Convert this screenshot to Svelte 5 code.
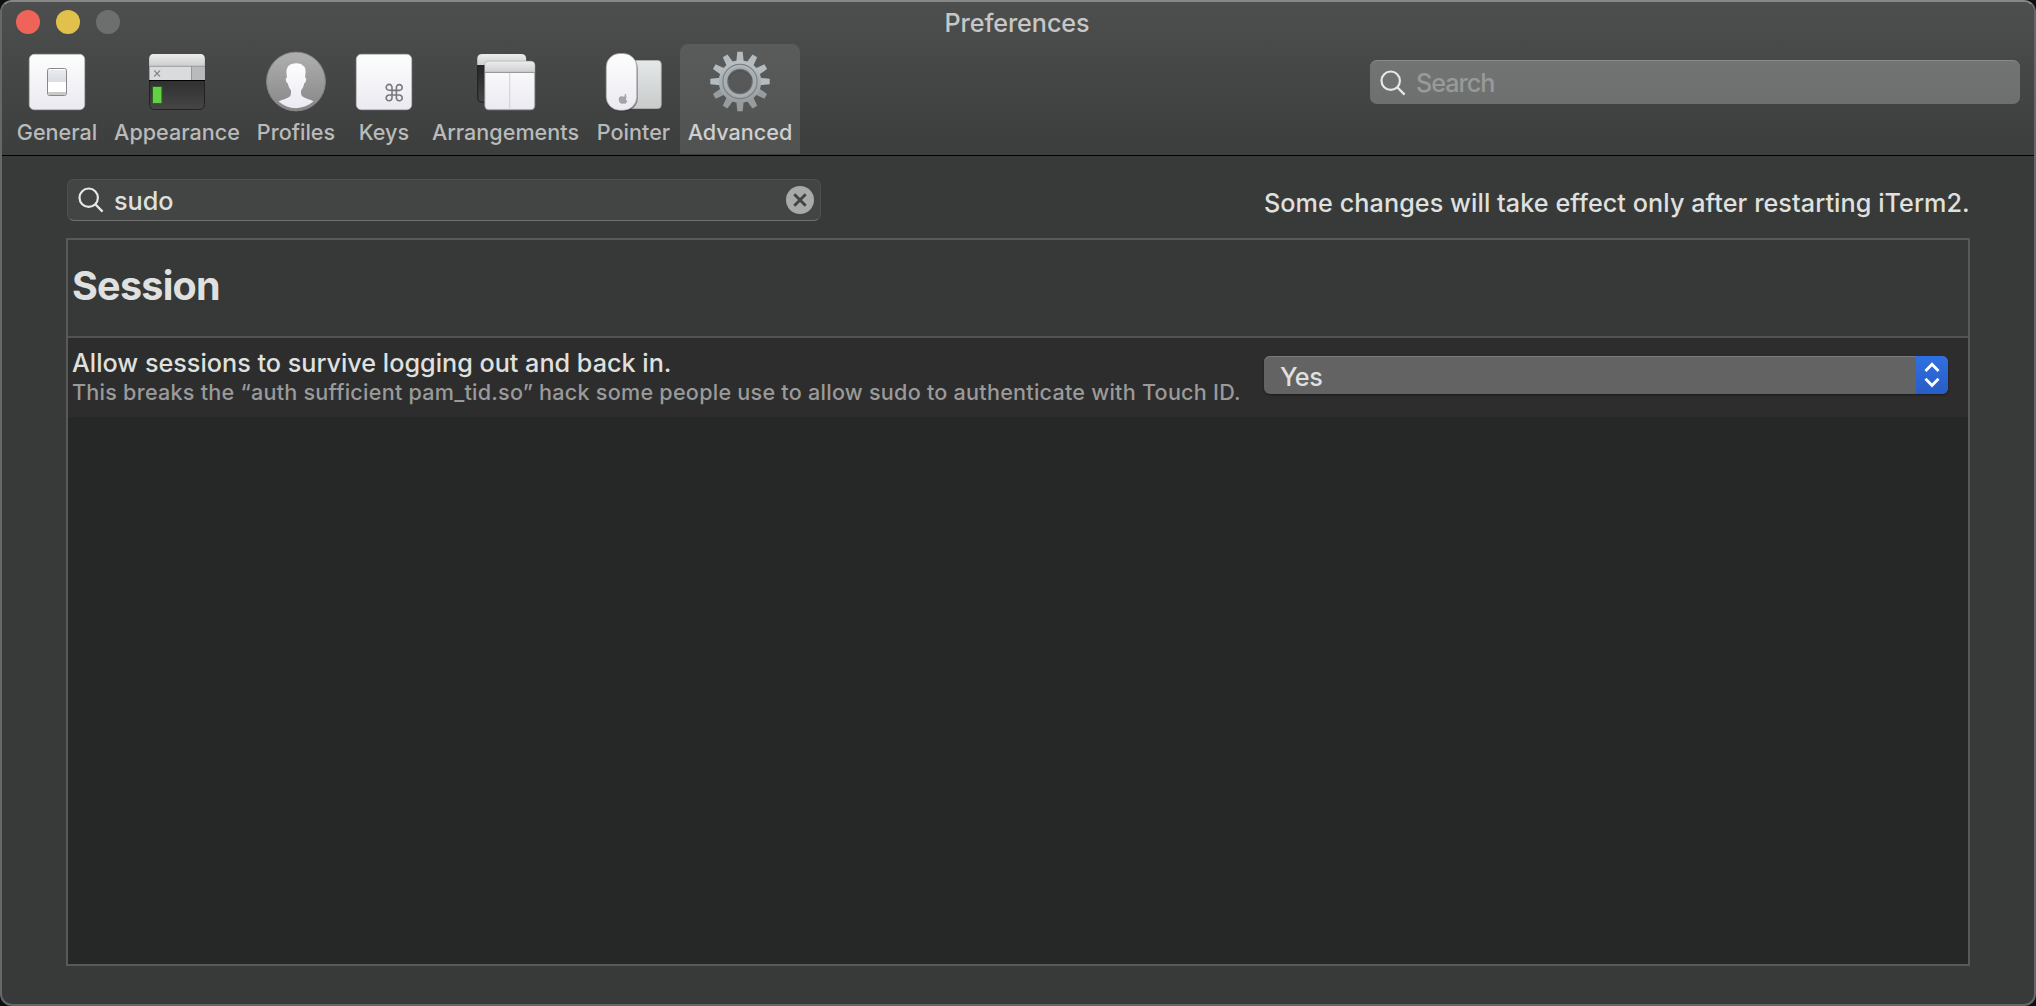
<script>
  const tabs = [
    { name: 'General', width: 98 },
    { name: 'Appearance', width: 142 },
    { name: 'Profiles', width: 96 },
    { name: 'Keys', width: 80 },
    { name: 'Arrangements', width: 163 },
    { name: 'Pointer', width: 93 },
    { name: 'Advanced', width: 120 }
  ];
  let active = $state('Advanced');
  let query = $state('sudo');
  const teeth = Array.from({ length: 12 }, (_, i) => i * 30);
</script>

{#snippet magnifier()}
  <svg class="magnifier" viewBox="0 0 26 26" width="26" height="26">
    <circle cx="10.7" cy="10.7" r="9.2" />
    <path d="M17.4 17.4 L24.6 24.6" />
  </svg>
{/snippet}

{#snippet icon(name)}
  <svg class="icon" viewBox="0 0 64 64" width="64" height="64">
    {#if name === 'General'}
      <rect x="4.3" y="4.3" width="55.4" height="55.4" rx="5" fill="url(#paper)" stroke="#b9babb" stroke-width=".7" />
      <rect x="22.5" y="18.5" width="19" height="27" rx="2" fill="#fff" stroke="#87888a" />
      <path d="M23 20h18v12H23z" fill="url(#switch)" />
      <path d="M23 42h18v1.5q0 1.5-1.5 1.5h-15q-1.5 0-1.5-1.5z" fill="#c9c9c7" />
    {:else if name === 'Appearance'}
      <rect x="4.5" y="4.5" width="55" height="55" rx="5" fill="url(#terminal)" stroke="#222" />
      <path d="M4.3 30V9q0-5 5-5h45.4q5 0 5 5v21z" fill="#dadbdc" />
      <path d="M4.3 16V9q0-5 5-5h45.4q5 0 5 5v7z" fill="url(#chrome)" />
      <path d="M46.5 16.5h13.2V30H46.5z" fill="#b9babc" />
      <path d="M4 16.3h56M46.5 16v14" stroke="#8b8c8e" stroke-width=".8" />
      <path d="M4 30.5h56" stroke="#000" />
      <path d="M9.2 20.5l5.8 6M15 20.5l-5.8 6" stroke="#88898b" stroke-width="1.2" />
      <rect x="7" y="36" width="10.5" height="18" fill="#2d7a20" opacity=".5" />
      <rect x="8" y="37" width="8.4" height="16" fill="#61d241" />
    {:else if name === 'Profiles'}
      <circle cx="32" cy="31.5" r="29.4" fill="url(#disc)" stroke="#858687" />
      <path
        d="M32.5 14C25 14 22 18 22.5 24.5L23 29c-1.5-.3-1.5 1-.8 3.5.5 1.8 1 2 1.6 2 .5 3.5 2 5.5 3.2 7.5 0 3.5 0 5-1.5 6.5-2.5 2-8 3-11 5C19.5 58 25.5 60.3 32 60.3S44.5 58 49.5 53.3c-3-2-8.5-3-11-5-1.5-1.5-1.5-3-1.5-6.3 1.5-2 2.7-4 3.2-7.5.8 0 1.2-.5 1.6-2 .7-2.5.7-3.8-.8-3.5l.5-4.5c.3-4-.2-7-2.5-8C38 15 36 14 32.5 14z"
        transform="translate(0 -1.3) scale(1 .97)"
        transform-origin="32 32"
        fill="url(#paper)"
      />
    {:else if name === 'Keys'}
      <rect x="4.3" y="4.3" width="55.4" height="55.4" rx="5" fill="url(#paper)" stroke="#b9babb" stroke-width=".7" />
      <g transform="translate(33.7 34.2)" fill="none" stroke="#77787b" stroke-width="1.6">
        <path d="M6 6H3.7A2.9 2.9 0 1 1 6.3 3.4V13.6A2.9 2.9 0 1 1 3.4 10.8H13.6A2.9 2.9 0 1 1 10.7 13.6V3.4A2.9 2.9 0 1 1 13.6 6.2H6" />
      </g>
    {:else if name === 'Arrangements'}
      <rect x="3.7" y="4.5" width="48" height="47.7" rx="4" fill="url(#terminal)" stroke="#1e1e1e" />
      <path d="M3.2 15V9q0-5 5-5h39q5 0 5 5v6z" fill="url(#chrome)" />
      <rect x="10.8" y="11.3" width="50" height="48.5" rx="4" fill="url(#paper)" stroke="#98999b" stroke-width=".8" />
      <path d="M11 22.2V15.5q0-4 4-4h41.6q4 0 4 4v6.7z" fill="url(#chrome)" />
      <path d="M11 22.4h49.6" stroke="#8e8f91" />
      <path d="M35.7 23v36.5" stroke="#cfd0d4" />
    {:else if name === 'Pointer'}
      <g transform="translate(-.8 0)">
        <rect x="14" y="10.5" width="46" height="48" rx="3.5" fill="url(#pad)" stroke="#b3b6b5" stroke-width=".8" />
        <rect x="5.5" y="4.5" width="31" height="57" rx="13.5" fill="#222" opacity=".5" />
        <rect x="5" y="3.5" width="30.6" height="56.8" rx="13.5" fill="url(#paper)" stroke="#a0a1a3" stroke-width=".7" />
        <path d="M21.7 46.5c-.2-1.5.8-2.6 2-2.9.1 1.5-.8 2.7-2 2.9zM24.3 51.6q-.9 2-2 2c-.7 0-1-.4-1.7-.4s-1 .4-1.7.4c-1.5 0-2.9-2.5-2.9-4.5 0-2.2 1.5-3.2 2.8-3.1.7 0 1.2.4 1.8.4s1.2-.5 2-.4q1 0 1.8.9c-1.7 1.100-1.5 3.3.3 4z" transform="translate(1.5 .2)" fill="#a3a4a6" />
      </g>
    {:else}
      <g fill="url(#steel)">
        {#each teeth as angle}
          <path d="M29.3 1.8h5.4l1 10h-7.4z" transform={`rotate(${angle} 32 31.5)`} fill={angle > 90 && angle < 270 ? '#969b9d' : '#b4bcc0'} />
        {/each}
        <path fill-rule="evenodd" d="M32 10.2a21.3 21.3 0 1 0 0 42.6a21.3 21.3 0 1 0 0-42.6zM32 19.3a12.2 12.2 0 1 1 0 24.4a12.2 12.2 0 1 1 0-24.4z" />
      </g>
      <circle cx="32" cy="31.5" r="17.2" fill="none" stroke="#7b8286" stroke-width="1.2" />
      <circle cx="32" cy="31.9" r="14" fill="none" stroke="#a9aeb1" stroke-width="2.8" />
      <circle cx="32" cy="31.5" r="12.2" fill="none" stroke="#6b7073" stroke-width="1.2" />
      <path d="M20.5 29.5a12 12 0 0 1 23 0" fill="none" stroke="#4f5456" stroke-width="1.5" />
    {/if}
  </svg>
{/snippet}

<svg class="defs" width="0" height="0">
  <defs>
    <linearGradient id="paper" x2="0" y2="1"><stop stop-color="#fdfdfe" /><stop offset="1" stop-color="#ebeaf1" /></linearGradient>
    <linearGradient id="switch" x2="0" y2="1"><stop stop-color="#e9ebef" /><stop offset="1" stop-color="#d9dde3" /></linearGradient>
    <linearGradient id="chrome" x2="0" y2="1"><stop stop-color="#ececed" /><stop offset="1" stop-color="#cdcecf" /></linearGradient>
    <linearGradient id="terminal" x2="0" y2="1"><stop stop-color="#1c1c1c" /><stop offset="1" stop-color="#464646" /></linearGradient>
    <linearGradient id="disc" x2="0" y2="1"><stop stop-color="#b0b0b0" /><stop offset="1" stop-color="#868686" /></linearGradient>
    <linearGradient id="pad" x2="0" y2="1"><stop stop-color="#e4e8e8" /><stop offset="1" stop-color="#c8cbca" /></linearGradient>
    <linearGradient id="steel" x2="0" y2="1"><stop stop-color="#b9c2c6" /><stop offset="1" stop-color="#989c9e" /></linearGradient>
  </defs>
</svg>

<div class="window">
  <header>
    <div class="titlebar">
      <div class="lights"><i class="close"></i><i class="minimize"></i><i class="zoom"></i></div>
      <div class="title"><span>Preferences</span></div>
    </div>
    <div class="toolbar">
      <nav>
        {#each tabs as tab}
          <button class="tab" class:active={active === tab.name} style:width={`${tab.width}px`} onclick={() => (active = tab.name)}>
            {@render icon(tab.name)}
            <span>{tab.name}</span>
          </button>
        {/each}
      </nav>
      <div class="global-search">
        {@render magnifier()}
        <span>Search</span>
      </div>
    </div>
  </header>

  <main>
    <div class="filter-row">
      <div class="filter">
        {@render magnifier()}
        <span>{query}</span>
        <svg class="clear" viewBox="0 0 28 28" width="28" height="28">
          <circle cx="14" cy="14" r="14" fill="#a8aaa9" />
          <path d="M8.3 8.3l11.4 11.4M19.7 8.3L8.3 19.7" stroke="#414342" stroke-width="2.8" />
        </svg>
      </div>
      <p class="notice"><span>Some changes will take effect only after restarting iTerm2.</span></p>
    </div>

    <section class="table">
      <h2><span>Session</span></h2>
      <div class="setting">
        <div class="copy">
          <p class="label"><span>Allow sessions to survive logging out and back in.</span></p>
          <p class="detail"><span>This breaks the “auth sufficient pam_tid.so” hack some people use to allow sudo to authenticate with Touch ID.</span></p>
        </div>
        <div class="select">
          <span>Yes</span>
          <svg viewBox="0 0 32 38" width="32" height="38">
            <path d="M9.5 15L16 8.3L22.5 15M9.5 22.8L16 29.5L22.5 22.8" />
          </svg>
        </div>
      </div>
    </section>
  </main>
</div>

<style>
  :global(body) {
    background: #0b1013;
  }
  .defs {
    position: absolute;
  }
  .window {
    box-sizing: border-box;
    width: 2036px;
    height: 1006px;
    border: 2px solid #666867;
    border-top-color: #868887;
    border-radius: 12px;
    overflow: hidden;
    display: flex;
    flex-direction: column;
    background: #383a39;
    color: #dfe0df;
    font-family: Inter, 'Liberation Sans', sans-serif;
    font-size: 25.2px;
    font-weight: 450;
    white-space: nowrap;
  }
  header {
    height: 153px;
    flex: none;
    border-bottom: 1px solid #000;
    background: linear-gradient(#4d4f4e, #3c3e3d);
  }
  .titlebar {
    display: grid;
    grid-template-columns: 1fr auto 1fr;
    align-items: center;
    height: 42px;
  }
  .lights {
    display: flex;
    gap: 16px;
    padding: 0 0 2px 14px;
  }
  .lights i {
    width: 24px;
    height: 24px;
    border-radius: 50%;
  }
  .close { background: #ee6459; }
  .minimize { background: #e1c04c; }
  .zoom { background: #6d6f6e; }
  .title {
    color: #c6c7c6;
    line-height: 42px;
    letter-spacing: -0.08px;
    padding-right: 2px;
  }
  .toolbar {
    display: flex;
    justify-content: space-between;
    height: 111px;
    padding: 0 14px 0 6px;
  }
  nav {
    display: flex;
  }
  .tab {
    box-sizing: border-box;
    height: 110px;
    padding: 6px 0 0;
    border: 0;
    border-radius: 8px 8px 0 0;
    background: none;
    color: #b9bab9;
    font: 450 21.6px/32px Inter, sans-serif;
    display: flex;
    flex-direction: column;
    align-items: center;
  }
  .tab span {
    margin-top: 2px;
  }
  .tab.active {
    background: linear-gradient(#5a5c5b, #505251);
    color: #cfd0cf;
  }
  .icon {
    flex: none;
    overflow: visible;
  }
  .global-search {
    box-sizing: border-box;
    display: flex;
    align-items: center;
    gap: 10px;
    width: 650px;
    height: 44px;
    margin-top: 16px;
    padding-left: 10px;
    border-radius: 7px;
    border-top: 1px solid #888a89;
    background: linear-gradient(#727473, #6e706f);
    color: #989a99;
    letter-spacing: -1.05px;
  }
  .global-search span,
  .filter span {
    padding-top: 1px;
  }
  .magnifier {
    fill: none;
    stroke: #e6e7e6;
    stroke-width: 2.2;
  }
  main {
    padding: 23px 64px 0;
  }
  .filter-row {
    display: flex;
    align-items: flex-start;
    justify-content: space-between;
    height: 59px;
  }
  .filter {
    box-sizing: border-box;
    display: flex;
    align-items: center;
    gap: 10px;
    width: 754px;
    height: 42px;
    margin-left: 1px;
    padding: 0 6px 0 10px;
    border: 1px solid #4e504f;
    border-bottom-color: #6e706f;
    border-radius: 7px;
    background: #434544;
  }
  .clear {
    margin-left: auto;
  }
  p, h2 {
    margin: 0;
  }
  .notice {
    width: 706px;
    line-height: 48px;
    letter-spacing: 0.07px;
  }
  .table {
    box-sizing: border-box;
    height: 728px;
    border: 2px solid #585a59;
    background: #262827;
  }
  h2 {
    box-sizing: border-box;
    height: 98px;
    padding-left: 4px;
    border-bottom: 2px solid #525453;
    background: #373938;
    font-size: 39.5px;
    font-weight: 700;
    letter-spacing: -0.75px;
    line-height: 92px;
  }
  .setting {
    display: flex;
    justify-content: space-between;
    height: 79px;
    padding: 0 20px 0 4px;
    background: #2d2d2d;
  }
  .label {
    margin-top: 9px;
    line-height: 32px;
  }
  .detail {
    color: #9a9a9a;
    font-size: 21.6px;
    line-height: 26px;
    letter-spacing: 0.24px;
  }
  .select {
    box-sizing: border-box;
    display: flex;
    justify-content: space-between;
    width: 684px;
    height: 38px;
    margin-top: 18px;
    padding-left: 16px;
    border-radius: 6px;
    overflow: hidden;
    background: #636363;
    box-shadow: inset 0 1px #7b7b7b, 0 1px 2px #1a1a1a;
    line-height: 42px;
    letter-spacing: -0.5px;
  }
  .select svg {
    background: linear-gradient(#2f70e2, #285dc6);
    fill: none;
    stroke: #fff;
    stroke-width: 2.8;
  }
</style>
